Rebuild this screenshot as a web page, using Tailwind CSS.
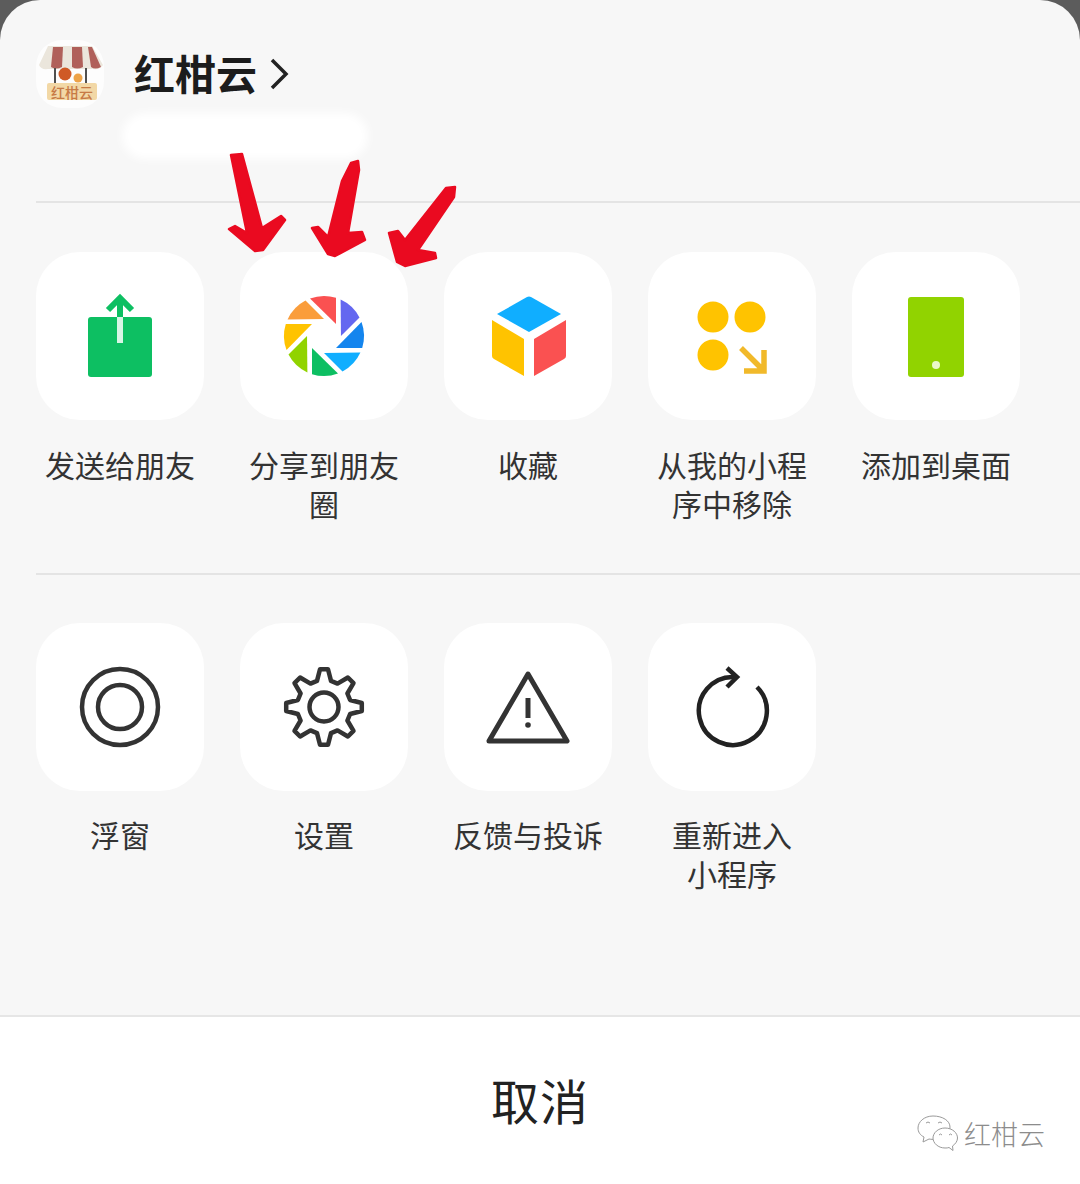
<!DOCTYPE html>
<html lang="zh">
<head>
<meta charset="utf-8">
<script src="https://cdn.jsdelivr.net/npm/@tailwindcss/browser@4"></script>
</head>
<body class="m-0">
<div class="relative w-[1080px] h-[1184px] overflow-hidden bg-[#5c5c5c] font-['Noto_Sans_CJK_SC','Noto_Sans',sans-serif] text-[#333]">
  <div class="w-full h-full flex flex-col rounded-t-[40px] overflow-hidden bg-[#f7f7f7]">

    <header class="h-[201px] shrink-0 pt-[40px] pl-[36px]">
      <div class="flex items-center gap-[30px] h-[68px]">
        <div class="relative w-[68px] h-[68px] rounded-[26px] bg-white/70 shrink-0">
          <svg viewBox="0 0 68 68" class="w-[68px] h-[68px]">
            <path d="M12 6h44l11 19q-3 5-10 4H12q-7 1-9-4z" fill="#ebe6dc"/>
            <path d="M17 7h10l-1 20q-6 3-11 0z" fill="#b0605a"/>
            <path d="M36 7h10l1 20q-6 3-11 0z" fill="#b0605a"/>
            <path d="M52 7h4l9 20q-6 3-10 0z" fill="#b0605a"/>
            <path d="M19 28v16M50 28v16" stroke="#4f4f4f" stroke-width="2"/>
            <circle cx="29" cy="34" r="6.500" fill="#cf5a26"/>
            <circle cx="42" cy="38" r="4.500" fill="#eda348"/>
            <rect x="11" y="43" width="50" height="17" rx="2" fill="#f2d8a6"/>
          </svg>
          <span class="absolute left-[11px] top-[43px] w-[50px] h-[17px] flex items-center justify-center text-[14px] leading-none text-[#c77a45] font-medium">红柑云</span>
        </div>
        <div class="flex items-center gap-[12px] -mt-[1px]">
          <span class="text-[41px] leading-none font-bold text-[#1c1c1c] -mt-[3px]">红柑云</span>
          <svg viewBox="0 0 20 32" class="w-[20px] h-[32px]"><path d="M3 2l14 14L3 30" fill="none" stroke="#222" stroke-width="3.5"/></svg>
        </div>
      </div>
      <div class="ml-[86px] mt-[5px] w-[246px] h-[46px] rounded-full bg-white blur-[5px]"></div>
    </header>

    <div class="ml-[36px] h-[2px] shrink-0 bg-[#e4e4e4]"></div>

    <section class="h-[370px] shrink-0 pt-[49px] pl-[36px]">
      <div class="grid grid-cols-[repeat(5,168px)] gap-x-[36px]">
        <div class="flex flex-col items-center">
          <div class="w-[168px] h-[168px] rounded-[44px] bg-white">
            <svg viewBox="0 0 168 168" class="w-full h-full">
              <rect x="52" y="65" width="64" height="60" rx="3" fill="#0dbf62"/>
              <path d="M84 48v17" stroke="#0dbf62" stroke-width="6"/>
              <path d="M72 58l12-12 12 12" fill="none" stroke="#0dbf62" stroke-width="6"/>
              <path d="M84 65v26" stroke="#d8f5e5" stroke-width="6"/>
            </svg>
          </div>
          <p class="mt-[25px] w-[168px] text-center text-[30px] leading-[39px]">发送给朋友</p>
        </div>

        <div class="flex flex-col items-center">
          <div class="w-[168px] h-[168px] rounded-[44px] bg-white">
            <svg viewBox="0 0 168 168" class="w-full h-full">
              <g transform="translate(84 84)">
                <path d="M-14 -37.500A40 40 0 0 1 12 -38.200V-12Z" fill="#fa5151"/>
                <path d="M-14 -37.500A40 40 0 0 1 12 -38.200V-12Z" fill="#6467f0" transform="rotate(45)"/>
                <path d="M-14 -37.500A40 40 0 0 1 12 -38.200V-12Z" fill="#1485ee" transform="rotate(90)"/>
                <path d="M-14 -37.500A40 40 0 0 1 12 -38.200V-12Z" fill="#10aeff" transform="rotate(135)"/>
                <path d="M-14 -37.500A40 40 0 0 1 12 -38.200V-12Z" fill="#0dbf62" transform="rotate(180)"/>
                <path d="M-14 -37.500A40 40 0 0 1 12 -38.200V-12Z" fill="#91d300" transform="rotate(225)"/>
                <path d="M-14 -37.500A40 40 0 0 1 12 -38.200V-12Z" fill="#ffc300" transform="rotate(270)"/>
                <path d="M-14 -37.500A40 40 0 0 1 12 -38.200V-12Z" fill="#fa9d3b" transform="rotate(315)"/>
              </g>
            </svg>
          </div>
          <p class="mt-[25px] w-[168px] text-center text-[30px] leading-[39px]">分享到朋友圈</p>
        </div>

        <div class="flex flex-col items-center">
          <div class="w-[168px] h-[168px] rounded-[44px] bg-white">
            <svg viewBox="0 0 168 168" class="w-full h-full">
              <path d="M83 45q2-1 4 0l30 17-32 18-32-18z" fill="#10aeff"/>
              <path d="M48 68l32 19v37L50 107q-2-1-2-3z" fill="#ffc300"/>
              <path d="M90 87l32-19v36q0 2-2 3l-30 17z" fill="#fa5151"/>
            </svg>
          </div>
          <p class="mt-[25px] w-[168px] text-center text-[30px] leading-[39px]">收藏</p>
        </div>

        <div class="flex flex-col items-center">
          <div class="w-[168px] h-[168px] rounded-[44px] bg-white">
            <svg viewBox="0 0 168 168" class="w-full h-full">
              <circle cx="65" cy="65" r="15.500" fill="#ffc300"/>
              <circle cx="102" cy="65" r="15.500" fill="#ffc300"/>
              <circle cx="65" cy="103" r="15.500" fill="#ffc300"/>
              <path d="M93 96l23 23M116 98v21H96" fill="none" stroke="#f1b92a" stroke-width="5.500"/>
            </svg>
          </div>
          <p class="mt-[25px] w-[168px] text-center text-[30px] leading-[39px]">从我的小程序中移除</p>
        </div>

        <div class="flex flex-col items-center">
          <div class="w-[168px] h-[168px] rounded-[44px] bg-white">
            <svg viewBox="0 0 168 168" class="w-full h-full">
              <rect x="56" y="45" width="56" height="80" rx="3" fill="#91d300"/>
              <circle cx="84" cy="113" r="4" fill="#eaf8c8"/>
            </svg>
          </div>
          <p class="mt-[25px] w-[168px] text-center text-[30px] leading-[39px]">添加到桌面</p>
        </div>
      </div>
    </section>

    <div class="ml-[36px] h-[2px] shrink-0 bg-[#e4e4e4]"></div>

    <section class="flex-1 pt-[48px] pl-[36px]">
      <div class="grid grid-cols-[repeat(5,168px)] gap-x-[36px]">
        <div class="flex flex-col items-center">
          <div class="w-[168px] h-[168px] rounded-[44px] bg-white">
            <svg viewBox="0 0 168 168" class="w-full h-full" fill="none" stroke="#333" stroke-width="4.500">
              <circle cx="84" cy="84" r="38"/>
              <circle cx="84" cy="84" r="22"/>
            </svg>
          </div>
          <p class="mt-[24px] w-[168px] text-center text-[30px] leading-[39px]">浮窗</p>
        </div>

        <div class="flex flex-col items-center">
          <div class="w-[168px] h-[168px] rounded-[44px] bg-white">
            <svg viewBox="0 0 168 168" class="w-full h-full" fill="none" stroke="#333" stroke-width="4.500" stroke-linejoin="round">
              <g transform="translate(84 84)">
                <path d="M-4 -37.800L4 -37.800L7 -26.100L13.500 -23.400L23.900 -29.500L29.500 -23.900L23.400 -13.500L26.100 -7L37.800 -4L37.800 4L26.100 7L23.400 13.500L29.500 23.900L23.900 29.500L13.500 23.400L7 26.100L4 37.800L-4 37.800L-7 26.100L-13.500 23.400L-23.900 29.500L-29.500 23.900L-23.400 13.500L-26.100 7L-37.800 4L-37.800 -4L-26.100 -7L-23.400 -13.500L-29.500 -23.900L-23.900 -29.500L-13.500 -23.400L-7 -26.100Z"/>
                <circle r="14.500"/>
              </g>
            </svg>
          </div>
          <p class="mt-[24px] w-[168px] text-center text-[30px] leading-[39px]">设置</p>
        </div>

        <div class="flex flex-col items-center">
          <div class="w-[168px] h-[168px] rounded-[44px] bg-white">
            <svg viewBox="0 0 168 168" class="w-full h-full" fill="none" stroke="#333" stroke-linejoin="round">
              <path d="M84 51L123 118H45Z" stroke-width="5"/>
              <path d="M84 75v20" stroke-width="5"/>
              <circle cx="84" cy="102" r="2.800" fill="#333" stroke="none"/>
            </svg>
          </div>
          <p class="mt-[24px] w-[168px] text-center text-[30px] leading-[39px]">反馈与投诉</p>
        </div>

        <div class="flex flex-col items-center">
          <div class="w-[168px] h-[168px] rounded-[44px] bg-white">
            <svg viewBox="0 0 168 168" class="w-full h-full" fill="none" stroke="#222" stroke-width="4.500">
              <path d="M109 64A34 34 0 1 1 87 54"/>
              <path d="M79 45l10 9-10 10"/>
            </svg>
          </div>
          <p class="mt-[24px] w-[168px] text-center text-[30px] leading-[39px]">重新进入<br>小程序</p>
        </div>
      </div>
    </section>

    <footer class="h-[169px] shrink-0 bg-white border-t-2 border-[#e6e6e6] flex items-center justify-center pb-[4px]">
      <span class="text-[48px] leading-none font-normal text-[#222] tracking-[1px]">取消</span>
    </footer>
  </div>

  <svg viewBox="0 0 1080 1184" class="absolute inset-0 w-[1080px] h-[1184px] pointer-events-none" fill="#ea0a20" stroke="#ea0a20" stroke-width="2.500" stroke-linejoin="round">
    <path d="M231 155L242 154L262 228L281 216L285 220L263 250L255 251L229 229L235 226L247 233Z"/>
    <path d="M351 163L358 161L359 170L348 233L362 232L365 240L335 256L328 254L312 228L318 227L328 237L342 181Z"/>
    <path d="M446 188L455 187L454 197L418 250L435 253L436 258L405 266L397 262L389 233L398 231L405 240Z"/>
  </svg>

  <div class="absolute left-[916px] top-[1113px] flex items-center gap-[4px] text-[#8c8c8c]">
    <svg viewBox="0 0 44 40" class="w-[44px] h-[40px]" fill="white" stroke="#9a9a9a" stroke-width="1">
      <path d="M17 3C8 3 2 9 2 15c0 4 2 7 6 9l-1 5 6-3c2 .4 6 .6 8 0 8-1 13-6 13-12C34 8 27 3 17 3Z"/>
      <path d="M29 15c-7 0-12 5-12 10s5 10 12 10c1.500 0 3 0 4 -.5l4 3-.5-4.500c3-2 5-5 5-8 0-5-5-10-12.500-10Z"/>
      <path d="M10 10l2-1 2 1M22 10l2-1 2 1M23 22l1.500-1 1.500 1M33 22l1.500-1 1.500 1" fill="none"/>
    </svg>
    <span class="text-[27px] leading-none font-light">红柑云</span>
  </div>
</div>
</body>
</html>
